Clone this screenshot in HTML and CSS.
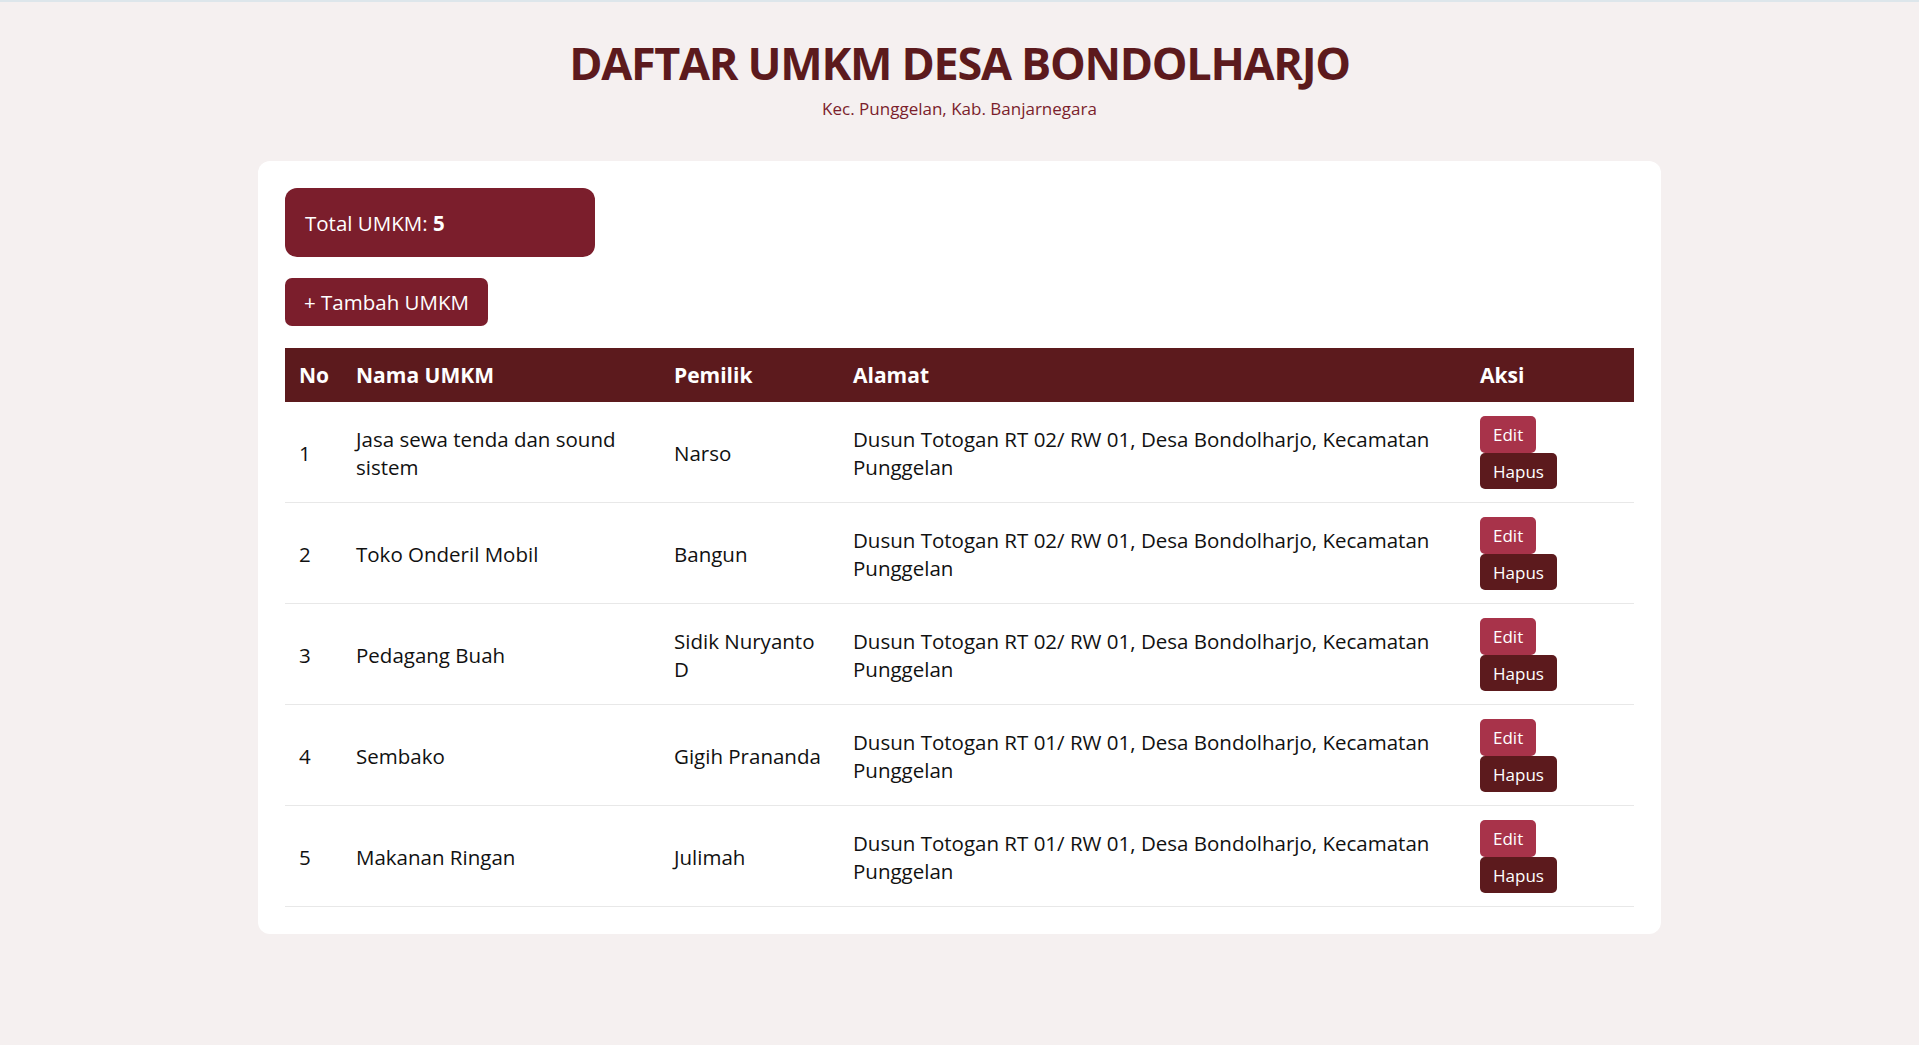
FILE: index.html
```html
<!DOCTYPE html>
<html lang="id">

<head>
    <meta charset="UTF-8">
    <meta name="viewport" content="width=device-width, initial-scale=1.0">
    <title>Daftar UMKM Desa Bondolharjo</title>
    <link rel="stylesheet" href="styles.css">
</head>

<body>
    <header class="page-head">
        <h1>DAFTAR UMKM DESA BONDOLHARJO</h1>
        <p>Kec. Punggelan, Kab. Banjarnegara</p>
    </header>

    <main class="card">
        <!-- Ringkasan jumlah -->
        <div class="total-box">Total UMKM:&nbsp;<b>5</b></div>

        <button class="add-btn">+ Tambah UMKM</button>

        <table class="umkm-table">
            <thead>
                <tr>
                    <th class="col-no">No</th>
                    <th class="col-nama">Nama UMKM</th>
                    <th class="col-pemilik">Pemilik</th>
                    <th class="col-alamat">Alamat</th>
                    <th class="col-aksi">Aksi</th>
                </tr>
            </thead>
            <tbody>
                <tr>
                    <td>1</td>
                    <td>Jasa sewa tenda dan sound sistem</td>
                    <td>Narso</td>
                    <td>Dusun Totogan RT 02/ RW 01, Desa Bondolharjo, Kecamatan Punggelan</td>
                    <td class="aksi"><button class="btn-edit">Edit</button><button class="btn-hapus">Hapus</button></td>
                </tr>
                <tr>
                    <td>2</td>
                    <td>Toko Onderil Mobil</td>
                    <td>Bangun</td>
                    <td>Dusun Totogan RT 02/ RW 01, Desa Bondolharjo, Kecamatan Punggelan</td>
                    <td class="aksi"><button class="btn-edit">Edit</button><button class="btn-hapus">Hapus</button></td>
                </tr>
                <tr>
                    <td>3</td>
                    <td>Pedagang Buah</td>
                    <td>Sidik Nuryanto D</td>
                    <td>Dusun Totogan RT 02/ RW 01, Desa Bondolharjo, Kecamatan Punggelan</td>
                    <td class="aksi"><button class="btn-edit">Edit</button><button class="btn-hapus">Hapus</button></td>
                </tr>
                <tr>
                    <td>4</td>
                    <td>Sembako</td>
                    <td>Gigih Prananda</td>
                    <td>Dusun Totogan RT 01/ RW 01, Desa Bondolharjo, Kecamatan Punggelan</td>
                    <td class="aksi"><button class="btn-edit">Edit</button><button class="btn-hapus">Hapus</button></td>
                </tr>
                <tr>
                    <td>5</td>
                    <td>Makanan Ringan</td>
                    <td>Julimah</td>
                    <td>Dusun Totogan RT 01/ RW 01, Desa Bondolharjo, Kecamatan Punggelan</td>
                    <td class="aksi"><button class="btn-edit">Edit</button><button class="btn-hapus">Hapus</button></td>
                </tr>
            </tbody>
        </table>
    </main>
</body>

</html>
```

FILE: styles.css
```css
/* Estilos generales */
html {
    border-top: 2px solid #dde6eb;
}

body {
    font-family: 'Open Sans', 'Noto Sans', sans-serif;
    margin: 0;
    padding: 0 0 80px;
    background: #f5f0f0;
    color: #111;
}

.page-head {
    text-align: center;
    padding-top: 33px;
}

.page-head h1 {
    margin: 0;
    font-size: 45px;
    line-height: 56px;
    font-weight: 700;
    color: #5c1a1d;
    letter-spacing: -1.3px;
}

.page-head p {
    margin: 6px 0 0;
    font-size: 17px;
    line-height: 24px;
    color: #7b1e2c;
}

.card {
    display: block;
    max-width: 1349px;
    margin: 40px auto 0;
    padding: 27px;
    background: #fff;
    border-radius: 12px;
}

.total-box {
    display: flex;
    align-items: center;
    width: 270px;
    height: 69px;
    padding: 0 20px;
    background: #7b1e2c;
    color: #fff;
    border-radius: 12px;
    font-size: 20.5px;
}

.total-box b {
    font-weight: 700;
}

.add-btn {
    display: block;
    margin: 21px 0 22px;
    height: 48px;
    padding: 0 19px;
    border: none;
    border-radius: 7px;
    background: #7b1e2c;
    color: #fff;
    font-family: inherit;
    font-size: 20.5px;
    cursor: pointer;
}

/* Tabla */
.umkm-table {
    width: 100%;
    border-collapse: collapse;
    table-layout: fixed;
    font-size: 20.5px;
}

.umkm-table th {
    background: #5c1a1d;
    color: #fff;
    text-align: left;
    font-weight: 700;
    font-size: 21px;
    height: 54px;
    padding: 0 14px;
}

.umkm-table td {
    padding: 14px 14px 13px;
    line-height: 28px;
    border-bottom: 1px solid #e8e8e8;
    vertical-align: middle;
}

.col-no { width: 29px; }
.col-nama { width: 290px; }
.col-pemilik { width: 151px; }
.col-alamat { width: 599px; }

.aksi button {
    display: block;
    border: none;
    color: #fff;
    font-family: inherit;
    font-size: 17px;
    border-radius: 5px;
    cursor: pointer;
    height: 37px;
}

.btn-edit {
    background: #a8334a;
    padding: 0 13px;
}

.btn-hapus {
    background: #5c1a1d;
    padding: 0 13px;
    height: 36px !important;
}
```
